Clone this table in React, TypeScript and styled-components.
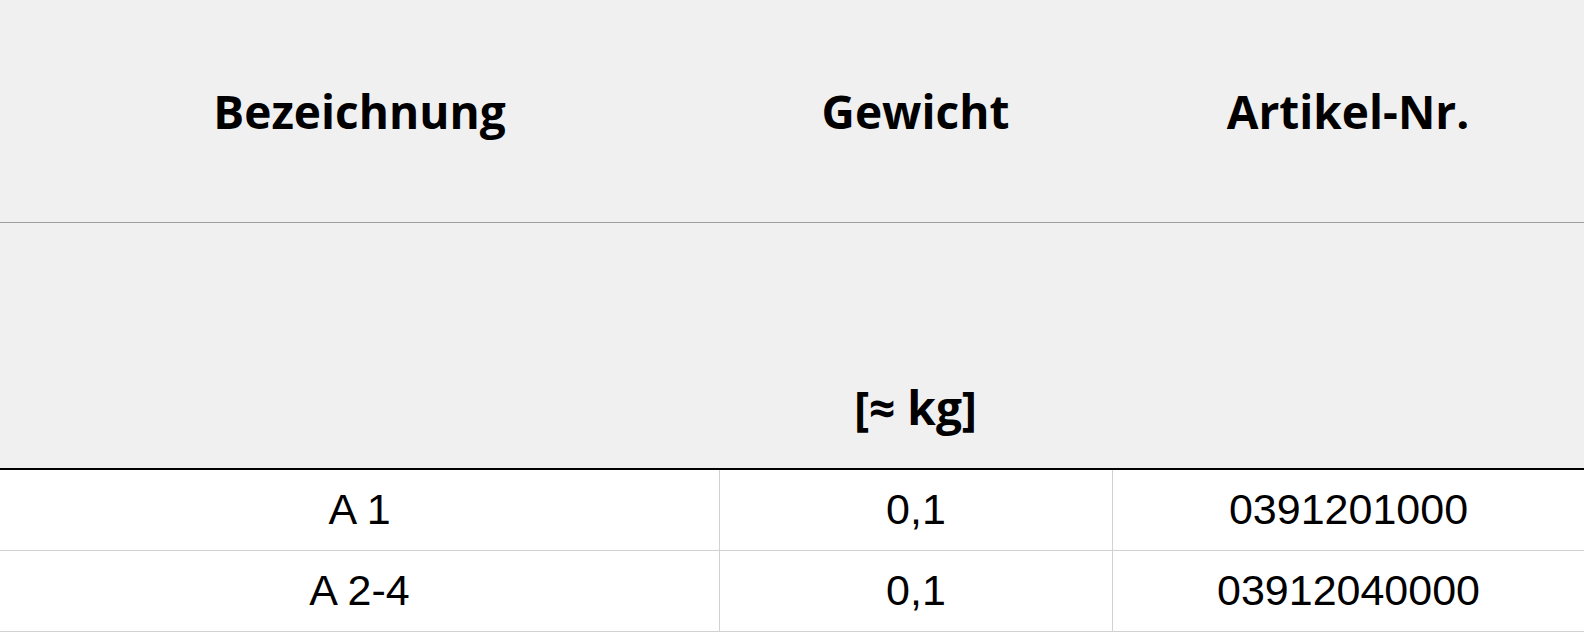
import React from "react";
import styled, { createGlobalStyle } from "styled-components";

const GlobalStyle = createGlobalStyle`
	html, body {
		margin: 0;
		padding: 0;
		background: #ffffff;
	}
	body {
		font-family: "Liberation Sans", Arial, sans-serif;
		color: #000000;
	}
`;

interface Article {
	name: string;
	weight: string;
	number: string;
}

const articles: Article[] = [
	{ name: "A 1", weight: "0,1", number: "0391201000" },
	{ name: "A 2-4", weight: "0,1", number: "03912040000" },
];

const App = () => {
	return (
		<>
			<GlobalStyle />
			<Table>
				<colgroup>
					<col style={{ width: 719 }} />
					<col style={{ width: 393 }} />
					<col style={{ width: 472 }} />
				</colgroup>
				<thead>
					<tr>
						<HeadCell>Bezeichnung</HeadCell>
						<HeadCell>Gewicht</HeadCell>
						<HeadCell>Artikel-Nr.</HeadCell>
					</tr>
					<tr>
						<UnitCell />
						<UnitCell>[≈ kg]</UnitCell>
						<UnitCell />
					</tr>
				</thead>
				<tbody>
					{articles.map((item) => (
						<tr key={item.number}>
							<BodyCell>{item.name}</BodyCell>
							<BodyCell divided>{item.weight}</BodyCell>
							<BodyCell divided>{item.number}</BodyCell>
						</tr>
					))}
				</tbody>
			</Table>
		</>
	);
};

export default App;

const Table = styled.table`
	width: 1584px;
	table-layout: fixed;
	border-collapse: separate;
	border-spacing: 0;
`;

const HeadCell = styled.th`
	box-sizing: border-box;
	height: 223px;
	padding: 0;
	background: #f0f0f0;
	border-bottom: 1px solid #9f9f9f;
	font-family: "Open Sans", "Noto Sans", sans-serif;
	font-weight: 700;
	font-size: 46px;
	text-align: center;
	vertical-align: middle;
`;

const UnitCell = styled(HeadCell)`
	height: 247px;
	padding-bottom: 30px;
	border-bottom: 2px solid #000000;
	vertical-align: bottom;
	line-height: normal;
`;

const BodyCell = styled.td<{ divided?: boolean }>`
	box-sizing: border-box;
	height: 81px;
	padding: 0 0 2px;
	border-bottom: 1px solid #d2d2d2;
	border-left: ${({ divided }) => (divided ? "1px solid #d2d2d2" : "none")};
	font-size: 43px;
	text-align: center;
	vertical-align: middle;
`;
